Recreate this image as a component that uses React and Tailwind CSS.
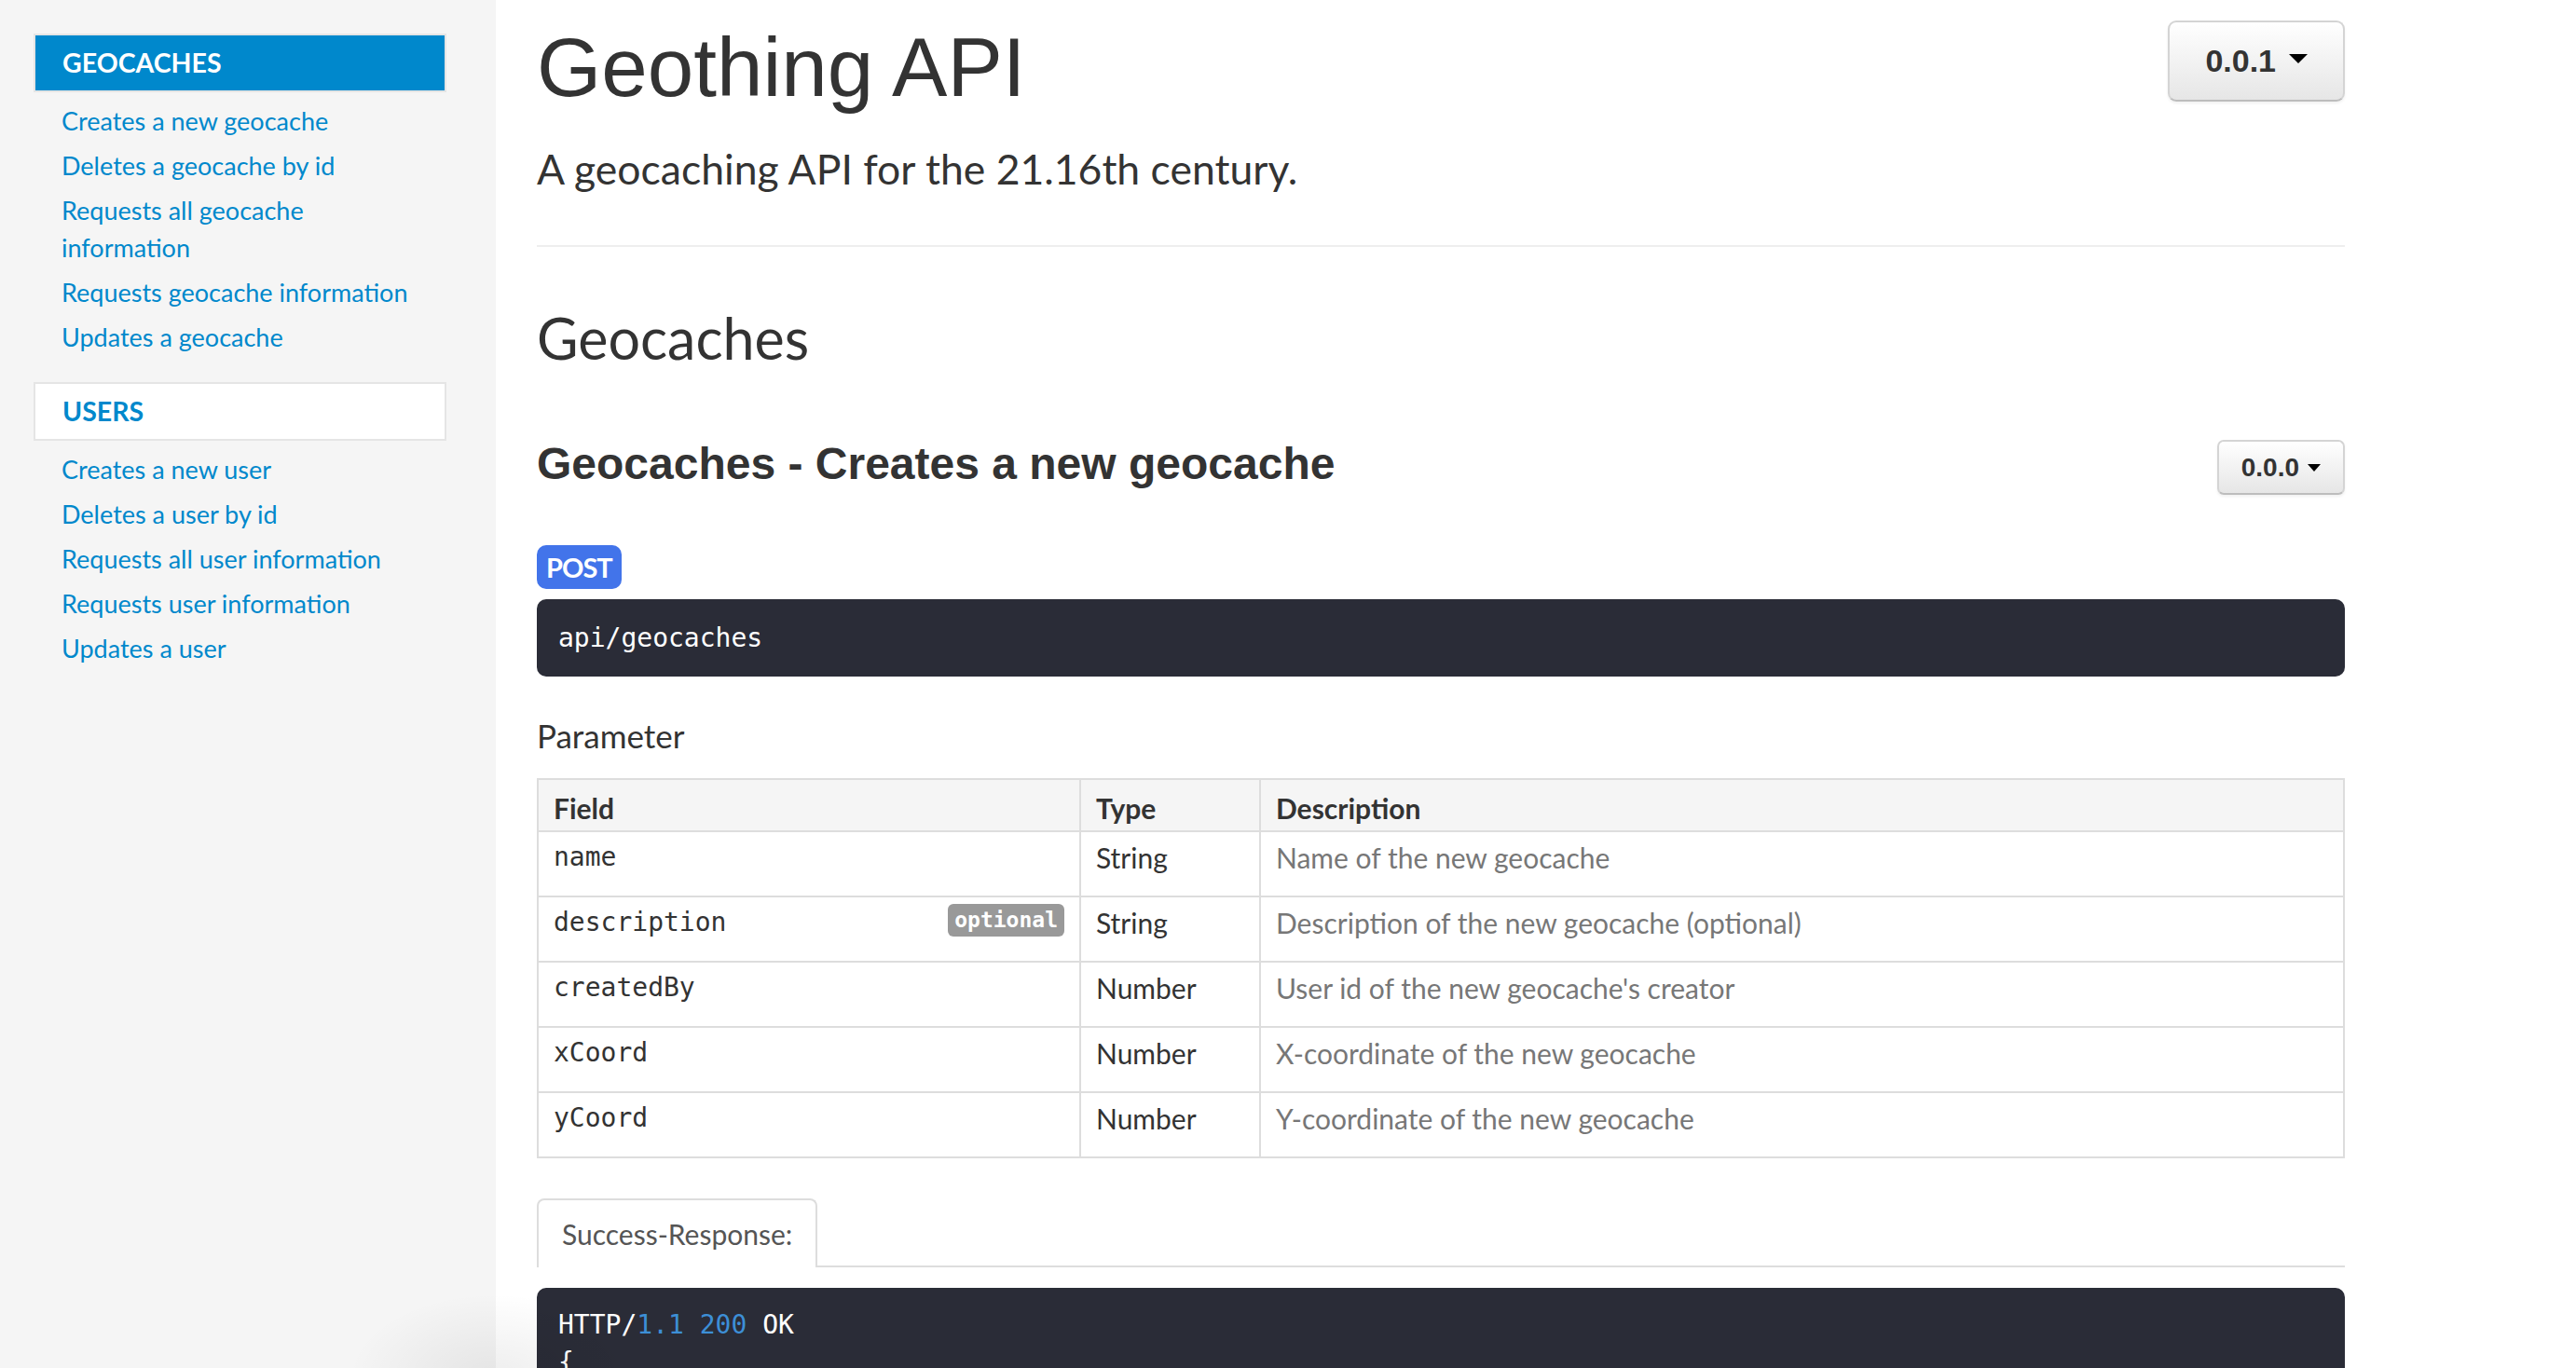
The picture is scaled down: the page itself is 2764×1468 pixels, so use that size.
import React from 'react';

const sans = "font-['Lato','Noto_Sans',sans-serif]";
const helv = "font-['Liberation_Sans',Arial,sans-serif]";
const mono = "font-['DejaVu_Sans_Mono','Liberation_Mono',monospace]";

const navGroups = [
  {
    title: 'GEOCACHES',
    active: true,
    links: [
      ['Creates a new geocache'],
      ['Deletes a geocache by id'],
      ['Requests all geocache', 'information'],
      ['Requests geocache information'],
      ['Updates a geocache'],
    ],
  },
  {
    title: 'USERS',
    active: false,
    links: [
      ['Creates a new user'],
      ['Deletes a user by id'],
      ['Requests all user information'],
      ['Requests user information'],
      ['Updates a user'],
    ],
  },
];

const params = [
  { field: 'name', type: 'String', desc: 'Name of the new geocache' },
  { field: 'description', optional: true, type: 'String', desc: 'Description of the new geocache (optional)' },
  { field: 'createdBy', type: 'Number', desc: "User id of the new geocache's creator" },
  { field: 'xCoord', type: 'Number', desc: 'X-coordinate of the new geocache' },
  { field: 'yCoord', type: 'Number', desc: 'Y-coordinate of the new geocache' },
];

const Caret = ({ big }) => (
  <span
    className={
      big
        ? 'inline-block w-0 h-0 border-x-[10px] border-x-transparent border-t-[10px] border-t-black mb-[6px]'
        : 'inline-block w-0 h-0 border-x-[7px] border-x-transparent border-t-[8px] border-t-black'
    }
  />
);

const VersionButton = ({ label, big }) => (
  <button
    className={`flex items-center ${helv} font-bold text-[#333] bg-gradient-to-b from-white to-[#e6e6e6] border-2 border-[#d4d4d4] border-b-[#bdbdbd] shadow-[0_2px_3px_rgba(0,0,0,0.06)] ${
      big ? 'h-[87px] px-[38px] gap-[14px] text-[34px] rounded-[9px]' : 'h-[59px] px-[24px] gap-[9px] text-[28px] rounded-[7px]'
    }`}
  >
    <span>{label}</span>
    <Caret big={big} />
  </button>
);

const Sidebar = () => (
  <div className="w-[532px] shrink-0 bg-[#f5f5f5] pt-[36px] pl-[36px] h-full">
    {navGroups.map((group) => (
      <div key={group.title} className="mb-[24px]">
        <div
          className={`w-[443px] h-[63px] flex items-center pl-[29px] border-2 border-[#e5e5e5] ${sans} text-[28.5px] font-bold ${
            group.active ? 'bg-[#0088cc] text-white' : 'bg-white text-[#0088cc]'
          }`}
        >
          {group.title}
        </div>
        <ul className="mt-[7px]">
          {group.links.map((lines) => (
            <li key={lines.join(' ')} className={`py-[4px] pl-[30px] ${sans} text-[27px] leading-[40px] text-[#0088cc]`}>
              {lines.map((l, i) => (
                <div key={i}>{l}</div>
              ))}
            </li>
          ))}
        </ul>
      </div>
    ))}
  </div>
);

const ParamTable = () => (
  <div className="mt-[24px] border-2 border-[#dddddd]">
    <div className={`grid grid-cols-[582px_193px_1fr] bg-[#f5f5f5] border-b-2 border-[#dddddd] h-[56px] ${sans} text-[30px] leading-[36px] font-bold text-[#333]`}>
      <div className="pl-[16px] pt-[12px] border-r-2 border-[#dddddd]">Field</div>
      <div className="pl-[16px] pt-[12px] border-r-2 border-[#dddddd]">Type</div>
      <div className="pl-[16px] pt-[12px]">Description</div>
    </div>
    {params.map((p, i) => (
      <div
        key={p.field}
        className={`grid grid-cols-[582px_193px_1fr] ${i < params.length - 1 ? 'h-[70px] border-b-2' : 'h-[68px]'} border-[#dddddd] leading-[36px]`}
      >
        <div className="pl-[16px] pr-[16px] pt-[9px] border-r-2 border-[#dddddd] flex justify-between items-start">
          <span className={`${mono} text-[28px] text-[#333]`}>{p.field}</span>
          {p.optional && (
            <span className={`${mono} text-[23px] leading-[35px] h-[35px] px-[7px] rounded-[6px] bg-[#999999] text-white font-bold mt-[-2px]`}>
              optional
            </span>
          )}
        </div>
        <div className={`pl-[16px] pt-[9px] border-r-2 border-[#dddddd] ${sans} text-[30px] text-[#333]`}>{p.type}</div>
        <div className={`pl-[16px] pt-[9px] ${sans} text-[30px] text-[#777]`}>{p.desc}</div>
      </div>
    ))}
  </div>
);

export default function App() {
  return (
    <div className="relative flex h-screen w-full overflow-hidden bg-white">
      <Sidebar />
      <main className="ml-[44px] w-[1940px] shrink-0 pt-[22px]">
        <div className="flex justify-between items-start">
          <h1 className={`${helv} text-[89px] leading-[90px] mt-[5px] text-[#333]`}>Geothing API</h1>
          <VersionButton label="0.0.1" big />
        </div>

        <p className={`${sans} text-[44.5px] leading-[60px] mt-[34px] text-[#333]`}>
          A geocaching API for the 21.16th century.
        </p>

        <hr className="mt-[52px] border-t-2 border-[#eeeeee]" />

        <h2 className={`${sans} text-[61px] leading-[70px] mt-[63px] text-[#333]`}>Geocaches</h2>

        <div className="flex justify-between items-start mt-[72px]">
          <h3 className={`${helv} font-bold text-[48px] leading-[56px] text-[#333]`}>
            Geocaches - Creates a new geocache
          </h3>
          <div className="mt-[2px]">
            <VersionButton label="0.0.0" />
          </div>
        </div>

        <div className="mt-[54px] flex">
          <span className={`inline-flex items-center h-[47px] px-[10px] rounded-[10px] bg-[#4274ea] text-white ${sans} font-bold text-[29px] tracking-[-1px]`}>
            POST
          </span>
        </div>

        <div className={`mt-[11px] h-[83px] rounded-[10px] bg-[#2a2c37] flex items-center pl-[23px] ${mono} text-[28px] text-white`}>
          api/geocaches
        </div>

        <h4 className={`${sans} text-[35px] leading-[44px] mt-[41px] text-[#333]`}>Parameter</h4>

        <ParamTable />

        <div className="mt-[43px] flex items-end border-b-2 border-[#dddddd] h-[74px]">
          <div className={`h-[74px] mb-[-2px] bg-white border-2 border-b-0 border-[#dddddd] rounded-t-[8px] px-[25px] flex items-center ${sans} text-[30px] text-[#555]`}>
            Success-Response:
          </div>
        </div>

        <div className={`mt-[22px] rounded-t-[10px] bg-[#2a2c37] pt-[20px] pl-[23px] ${mono} text-[28px] leading-[40px] text-white h-[200px]`}>
          <div>
            HTTP/<span className="text-[#3d8fd6]">1.1</span> <span className="text-[#3d8fd6]">200</span> OK
          </div>
          <div>{'{'}</div>
        </div>
      </main>

      {/* faint shadow blob at the bottom-left corner */}
      <div className="pointer-events-none absolute left-[360px] top-[1380px] w-[340px] h-[200px] bg-[radial-gradient(ellipse_at_center,rgba(0,0,0,0.07),transparent_65%)]" />
    </div>
  );
}
